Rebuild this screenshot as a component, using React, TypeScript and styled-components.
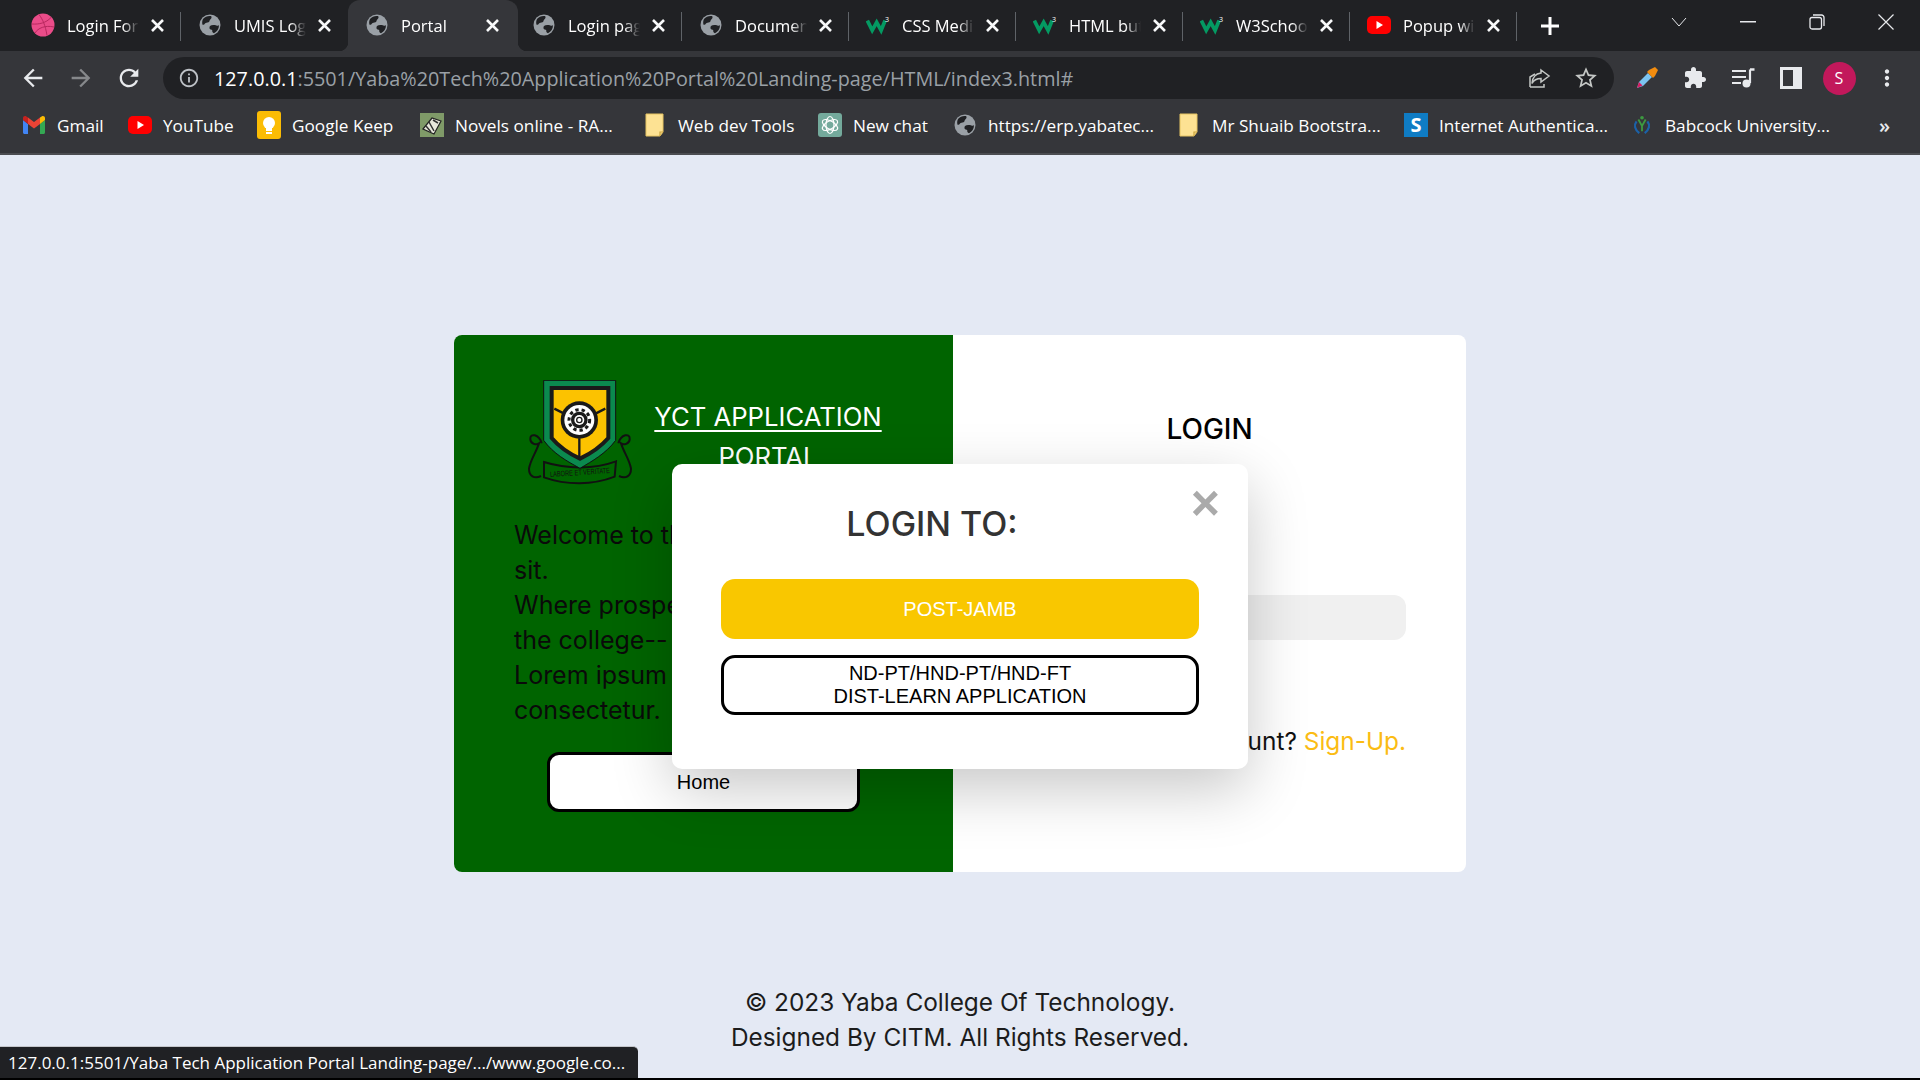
import React from "react";
import styled, { createGlobalStyle } from "styled-components";

const GlobalStyle = createGlobalStyle`
  html, body {
    margin: 0;
    padding: 0;
    height: 100%;
    overflow: hidden;
  }
  * { box-sizing: border-box; }
  #root { height: 100%; }
`;

const chromeFont = `"Open Sans", "Noto Sans", sans-serif`;
const pageFont = `Inter, "Open Sans", sans-serif`;

/* ---------- favicons and logos ---------- */

const Globe = () => (
  <svg width="22" height="22" viewBox="0 0 22 22">
    <circle cx="11" cy="11" r="10.5" fill="#9aa0a6" />
    <path d="M4 5c2-2.5 5-3.5 8-3 1 1 .5 2.5-.5 3.2-1.2.8-.6 2.4-2 3-1.300.6-2.800 0-3.500 1.300-.5 1-1.500 1.500-2.500 1.200C3 9 3 7 4 5z" fill="#202124" />
    <path d="M11 12c1.500-1.200 4-1.200 6.500-.5 1 .3 1.800.2 2.500-.3 0 3.500-1.800 6.500-5 8-1.500-.4-2-1.700-1.700-3-.8-.8-2.600-.2-2.800-2.200-.1-.8 0-1.500.5-2z" fill="#202124" />
  </svg>
);

const Dribbble = () => (
  <svg width="24" height="24" viewBox="0 0 24 24" fill="none">
    <circle cx="12" cy="12" r="11.500" fill="#ea4c89" />
    <g stroke="#b8285f" strokeWidth="1">
      <path d="M8 1.500c3.500 4.500 6.500 11 8 21" />
      <path d="M1 11c7 .5 14-1 19-6.500" />
      <path d="M4 20c3-5 10-8 19-6" />
    </g>
  </svg>
);

const W3 = () => (
  <svg width="27" height="20" viewBox="0 0 27 20" fill="none">
    <polyline points="1.500,5 7,16 12,7 17,16 21.500,5" stroke="#049a62" strokeWidth="4.200" />
    <text x="21.500" y="7" fontSize="8" fill="#fff" fontFamily="Open Sans, sans-serif">3</text>
  </svg>
);

const YouTube = () => (
  <svg width="24" height="18" viewBox="0 0 24 18">
    <rect width="24" height="18" rx="5" fill="#f00" />
    <path d="M9.500 5l6.500 4-6.500 4z" fill="#fff" />
  </svg>
);

const Gmail = () => (
  <svg width="22" height="18" viewBox="0 0 22 18" fill="none">
    <path d="M0 4v12.500c0 .8.700 1.500 1.500 1.500H5V8z" fill="#4285f4" />
    <path d="M17 8v10h3.500c.8 0 1.500-.7 1.500-1.500V4z" fill="#34a853" />
    <path d="M5 8l6 4.500L17 8V1.500L11 6 5 1.500z" fill="#ea4335" />
    <path d="M0 4l5 4V1.500L3 .3C1.700-.5 0 .5 0 2z" fill="#c5221f" />
    <path d="M17 1.500V8l5-4V2c0-1.500-1.700-2.500-3-1.700z" fill="#fbbc04" />
  </svg>
);

const Keep = () => (
  <svg width="24" height="28" viewBox="0 0 24 28">
    <rect width="24" height="28" rx="3" fill="#fbbc04" />
    <circle cx="12" cy="12" r="6" fill="#fff" />
    <rect x="9" y="16" width="6" height="4" fill="#fff" />
    <rect x="9" y="21" width="6" height="2" fill="#fff" />
  </svg>
);

const Novels = () => (
  <svg width="24" height="24" viewBox="0 0 24 24" fill="none">
    <rect width="24" height="24" fill="#7f9a68" />
    <path d="M3 16L12 5l9 3-7 13z" fill="#e8e8dc" stroke="#222" strokeWidth="1.200" />
    <path d="M9 9l5 9M6 13l5 6M13 7l5 3" stroke="#333" strokeWidth="1.500" />
  </svg>
);

const Folder = () => (
  <svg width="20" height="24" viewBox="0 0 20 24">
    <path d="M1 1h17v18l-3 4H1z" fill="#fde293" stroke="#e6c463" strokeWidth="1" />
    <path d="M15 23v-4h3" fill="none" stroke="#c9a23c" strokeWidth="1.200" />
  </svg>
);

const ChatGpt = () => (
  <svg width="24" height="24" viewBox="0 0 24 24" fill="none">
    <rect width="24" height="24" rx="3" fill="#74aa9c" />
    <g stroke="#fff" strokeWidth="1.200">
      <ellipse cx="12" cy="12" rx="4" ry="8.500" />
      <ellipse cx="12" cy="12" rx="4" ry="8.500" transform="rotate(60 12 12)" />
      <ellipse cx="12" cy="12" rx="4" ry="8.500" transform="rotate(120 12 12)" />
    </g>
  </svg>
);

const SquareS = () => (
  <svg width="24" height="24" viewBox="0 0 24 24">
    <rect width="24" height="24" fill="#0f7cc4" />
    <text x="12" y="19" fontSize="20" fontWeight="700" textAnchor="middle" fill="#fff" fontFamily="Open Sans, sans-serif">S</text>
  </svg>
);

const Babcock = () => (
  <svg width="20" height="20" viewBox="0 0 20 22" fill="none">
    <path d="M4 7C1 11 2 16 7 20" stroke="#1b62a8" strokeWidth="2.500" />
    <path d="M16 7c3 4 2 9-3 13" stroke="#1b62a8" strokeWidth="2.500" />
    <path d="M6 5l4 7 4-7M10 12v6" stroke="#3d9a40" strokeWidth="2" />
    <circle cx="10" cy="3" r="2" fill="#3d9a40" />
  </svg>
);

const CollegeCrest = () => (
  <svg width="104" height="105" viewBox="85 60 310 315" fill="none">
    {/* scrolls */}
    <path d="M125 250c-8-28-36-32-34-12 1 14 18 18 26 12-10 30-26 50-30 76 0 22 16 32 36 22" stroke="#111" strokeWidth="6" />
    <path d="M355 250c8-28 36-32 34-12-1 14-18 18-26 12 10 30 26 50 30 76 0 22-16 32-36 22" stroke="#111" strokeWidth="6" />
    <path d="M132 306c70 22 150 22 216-2l-4 46c-66 26-144 26-212 2z" fill="#006400" stroke="#111" strokeWidth="6" />
    <text x="240" y="345" fontSize="23" fill="#111" textAnchor="middle" fontFamily="Liberation Sans, sans-serif" textLength="180" lengthAdjust="spacingAndGlyphs" transform="rotate(-4 240 340)">LABORE ET VERITATE</text>
    {/* shield */}
    <path d="M131 61h216v180c-30 40-70 62-107 84-40-22-80-44-109-84z" fill="#0b8a4f" stroke="#111" strokeWidth="3" />
    <path d="M155 84h170v150c-26 30-56 48-85 62-30-14-60-32-85-62z" fill="#fcc200" stroke="#1a1a1a" strokeWidth="12" />
    <path d="M238 235v62M163 146l28 14M316 146l-28 14" stroke="#1a1a1a" strokeWidth="7" />
    <circle cx="238" cy="180" r="56" fill="#1a1a1a" />
    <circle cx="238" cy="180" r="45" fill="#fff" />
    <circle cx="238" cy="180" r="31" stroke="#1a1a1a" strokeWidth="9" strokeDasharray="10 9" />
    <circle cx="238" cy="180" r="25" fill="#1a1a1a" />
    <circle cx="238" cy="180" r="15" fill="#fff" />
    <circle cx="238" cy="180" r="8" stroke="#1a1a1a" strokeWidth="4" />
  </svg>
);

/* ---------- toolbar icons ---------- */

const MaterialIcon = ({ d, size = 24, color = "#e8eaed" }: { d: string; size?: number; color?: string }) => (
  <svg width={size} height={size} viewBox="0 0 24 24" fill={color}>
    <path d={d} />
  </svg>
);

const ICONS = {
  back: "M20 11H7.830l5.590-5.590L12 4l-8 8 8 8 1.410-1.410L7.830 13H20v-2z",
  forward: "M4 11h12.170l-5.590-5.590L12 4l8 8-8 8-1.410-1.410L16.170 13H4v-2z",
  reload: "M17.650 6.350C16.200 4.900 14.210 4 12 4c-4.420 0-7.990 3.580-7.990 8s3.570 8 7.990 8c3.730 0 6.840-2.550 7.730-6h-2.080c-.82 2.330-3.040 4-5.650 4-3.310 0-6-2.690-6-6s2.690-6 6-6c1.660 0 3.140.690 4.220 1.780L13 11h7V4l-2.350 2.350z",
  info: "M11 7h2v2h-2zm0 4h2v6h-2zm1-9C6.480 2 2 6.480 2 12s4.480 10 10 10 10-4.480 10-10S17.520 2 12 2zm0 18c-4.410 0-8-3.590-8-8s3.590-8 8-8 8 3.590 8 8-3.590 8-8 8z",
  star: "M22 9.240l-7.190-.62L12 2 9.190 8.630 2 9.240l5.460 4.730L5.820 21 12 17.270 18.180 21l-1.630-7.030L22 9.240zM12 15.400l-3.760 2.270 1-4.280-3.320-2.880 4.380-.38L12 6.100l1.710 4.040 4.380.38-3.320 2.880 1 4.280L12 15.400z",
  puzzle: "M20.500 11H19V7c0-1.100-.9-2-2-2h-4V3.500C13 2.120 11.880 1 10.500 1S8 2.120 8 3.500V5H4c-1.100 0-1.990.9-1.990 2v3.800H3.500c1.490 0 2.700 1.210 2.700 2.700s-1.210 2.700-2.700 2.700H2V20c0 1.100.9 2 2 2h3.800v-1.500c0-1.490 1.210-2.700 2.700-2.700 1.490 0 2.700 1.210 2.700 2.700V22H17c1.100 0 2-.9 2-2v-4h1.500c1.380 0 2.500-1.120 2.500-2.500S21.880 11 20.500 11z",
  dots: "M12 8c1.100 0 2-.9 2-2s-.9-2-2-2-2 .9-2 2 .9 2 2 2zm0 2c-1.100 0-2 .9-2 2s.9 2 2 2 2-.9 2-2-.9-2-2-2zm0 6c-1.100 0-2 .9-2 2s.9 2 2 2 2-.9 2-2-.9-2-2-2z",
};

const ShareIcon = () => (
  <svg width="24" height="24" viewBox="0 0 24 24" fill="none" stroke="#c4c7c5" strokeWidth="1.500">
    <path d="M3 21V11l5-3M3 21h14v-3" />
    <path d="M14 4l8 6-8 6v-3.500c-4 0-7 1-9 5 .5-6 4-10 9-10.500z" />
  </svg>
);

const Eyedropper = () => (
  <svg width="24" height="24" viewBox="0 0 24 24" fill="none">
    <path d="M2 22l2-6 9-9 4 4-9 9z" fill="#7cc4f0" />
    <path d="M2 22l2-6 3.500 3.500z" fill="#d81b60" />
    <path d="M12 6l2-2 2-1 4-2 3 3-2 4-1 2-2 2z" fill="#f28c0f" />
  </svg>
);

const QueueIcon = () => (
  <svg width="26" height="24" viewBox="0 0 26 24" fill="none">
    <path d="M2 5h14M2 11h14M2 17h9" stroke="#e8eaed" strokeWidth="2.200" />
    <path d="M20 3.500V17" stroke="#e8eaed" strokeWidth="2.200" />
    <path d="M20 3.500h4.500" stroke="#e8eaed" strokeWidth="2.500" />
    <circle cx="16.500" cy="17.500" r="4" fill="#e8eaed" />
  </svg>
);

const SidePanelIcon = () => (
  <svg width="22" height="22" viewBox="0 0 22 22" fill="none">
    <rect x="1.500" y="1.500" width="19" height="19" stroke="#e8eaed" strokeWidth="3" />
    <rect x="13" y="2" width="8" height="18" fill="#e8eaed" />
  </svg>
);

/* ---------- data ---------- */

type TabData = { title: string; icon: React.ReactNode; active?: boolean; sep?: boolean };

const tabs: TabData[] = [
  { title: "Login Form", icon: <Dribbble />, sep: true },
  { title: "UMIS Login", icon: <Globe /> },
  { title: "Portal", icon: <Globe />, active: true },
  { title: "Login page", icon: <Globe />, sep: true },
  { title: "Document", icon: <Globe />, sep: true },
  { title: "CSS Media", icon: <W3 />, sep: true },
  { title: "HTML button", icon: <W3 />, sep: true },
  { title: "W3Schools", icon: <W3 />, sep: true },
  { title: "Popup with", icon: <YouTube />, sep: true },
];

const bookmarks: { label: string; icon: React.ReactNode; width: number }[] = [
  { label: "Gmail", icon: <Gmail />, width: 106 },
  { label: "YouTube", icon: <YouTube />, width: 129 },
  { label: "Google Keep", icon: <Keep />, width: 163 },
  { label: "Novels online - RA...", icon: <Novels />, width: 223 },
  { label: "Web dev Tools", icon: <Folder />, width: 175 },
  { label: "New chat", icon: <ChatGpt />, width: 135 },
  { label: "https://erp.yabatec...", icon: <Globe />, width: 224 },
  { label: "Mr Shuaib Bootstra...", icon: <Folder />, width: 227 },
  { label: "Internet Authentica...", icon: <SquareS />, width: 226 },
  { label: "Babcock University...", icon: <Babcock />, width: 230 },
];

/* ---------- app ---------- */

export default function App() {
  return (
    <Screen>
      <GlobalStyle />
      <TabStrip>
        {tabs.map((tab) => (
          <Tab key={tab.title} $active={tab.active} $sep={tab.sep}>
            <TabIcon>{tab.icon}</TabIcon>
            <TabTitle>{tab.title}</TabTitle>
            <svg width="15" height="15" viewBox="0 0 15 15" fill="none" stroke="#f8f9fa" strokeWidth="2.600">
              <path d="M2 2l11 11M13 2L2 13" />
            </svg>
          </Tab>
        ))}
        <NewTab>
          <svg width="20" height="20" viewBox="0 0 20 20" fill="none" stroke="#fff" strokeWidth="3">
            <path d="M10 1v18M1 10h18" />
          </svg>
        </NewTab>
        <WindowControls>
          <WindowButton>
            <svg width="18" height="12" viewBox="0 0 18 12" fill="none" stroke="#e8eaed"><path d="M2 2l7 8 7-8" /></svg>
          </WindowButton>
          <WindowButton>
            <svg width="16" height="2" viewBox="0 0 16 2"><rect width="16" height="1.500" fill="#e8eaed" /></svg>
          </WindowButton>
          <WindowButton>
            <svg width="16" height="16" viewBox="0 0 16 16" fill="none" stroke="#e8eaed" strokeWidth="1.300"><rect x="1" y="3.500" width="11.500" height="11.500" rx="2" /><path d="M4 1h8.500A2.500 2.500 0 0 1 15 3.500V12" /></svg>
          </WindowButton>
          <WindowButton>
            <svg width="16" height="16" viewBox="0 0 16 16" fill="none" stroke="#e8eaed" strokeWidth="1.200"><path d="M.5.500l15 15M15.500.5l-15 15" /></svg>
          </WindowButton>
        </WindowControls>
      </TabStrip>

      <Toolbar>
        <NavButtons>
          <NavButton><MaterialIcon d={ICONS.back} size={28} /></NavButton>
          <NavButton><MaterialIcon d={ICONS.forward} size={28} color="#86888b" /></NavButton>
          <NavButton><MaterialIcon d={ICONS.reload} size={28} /></NavButton>
        </NavButtons>
        <AddressBar>
          <MaterialIcon d={ICONS.info} size={22} color="#bdc1c6" />
          <Url>
            <UrlHost>127.0.0.1</UrlHost>:5501/Yaba%20Tech%20Application%20Portal%20Landing-page/HTML/index3.html#
          </Url>
          <AddressActions>
            <ShareIcon />
            <MaterialIcon d={ICONS.star} size={26} color="#c4c7c5" />
          </AddressActions>
        </AddressBar>
        <Extensions>
          <ExtensionSlot><Eyedropper /></ExtensionSlot>
          <ExtensionSlot><MaterialIcon d={ICONS.puzzle} /></ExtensionSlot>
          <ExtensionSlot><QueueIcon /></ExtensionSlot>
          <ExtensionSlot><SidePanelIcon /></ExtensionSlot>
          <ExtensionSlot><Avatar>S</Avatar></ExtensionSlot>
          <ExtensionSlot><MaterialIcon d={ICONS.dots} size={26} /></ExtensionSlot>
        </Extensions>
      </Toolbar>

      <BookmarkBar>
        {bookmarks.map((b) => (
          <Bookmark key={b.label} $width={b.width}>
            <BookmarkIcon>{b.icon}</BookmarkIcon>
            {b.label}
          </Bookmark>
        ))}
        <MoreBookmarks>»</MoreBookmarks>
      </BookmarkBar>

      <Page>
        <Card>
          <BrandPanel>
            <BrandHead>
              <CollegeCrest />
              <BrandTitle>YCT APPLICATION PORTAL</BrandTitle>
            </BrandHead>
            <Intro>
              Welcome to the portal, lorem
              <br />
              sit.
              <br />
              Where prospective students
              <br />
              the college--
              <br />
              Lorem ipsum dolor sit amet
              <br />
              consectetur.
            </Intro>
            <HomeButton>Home</HomeButton>
          </BrandPanel>
          <LoginPanel>
            <LoginTitle>LOGIN</LoginTitle>
            <FieldBox />
            <SignUpLine>
              Don't have an account? <SignUpLink>Sign-Up.</SignUpLink>
            </SignUpLine>
          </LoginPanel>
        </Card>
        <Footer>
          © 2023 Yaba College Of Technology.
          <br />
          Designed By CITM. All Rights Reserved.
        </Footer>

        <Modal>
          <ModalHead>
            <ModalTitle>LOGIN TO:</ModalTitle>
            <ModalClose>×</ModalClose>
          </ModalHead>
          <ModalButton $primary>POST-JAMB</ModalButton>
          <ModalButton>
            ND-PT/HND-PT/HND-FT
            <br />
            DIST-LEARN APPLICATION
          </ModalButton>
        </Modal>

        <StatusBubble>127.0.0.1:5501/Yaba Tech Application Portal Landing-page/.../www.google.co...</StatusBubble>
      </Page>
      <BottomEdge />
    </Screen>
  );
}

const Screen = styled.div`
  height: 100%;
  display: flex;
  flex-direction: column;
  font-family: ${chromeFont};
`;

const TabStrip = styled.div`
  height: 51px;
  flex: none;
  background: #202124;
  display: flex;
  padding-left: 14px;
`;

const Tab = styled.div<{ $active?: boolean; $sep?: boolean }>`
  position: relative;
  flex: none;
  width: ${(p) => (p.$active ? "170px" : "167px")};
  margin-right: ${(p) => (p.$active ? "-3px" : "0")};
  height: 51px;
  display: flex;
  align-items: center;
  padding: 0 ${(p) => (p.$active ? "18px" : "16px")} 1px 17px;
  color: #fff;
  font-size: 16.500px;
  background: ${(p) => (p.$active ? "#35363a" : "transparent")};
  border-radius: 12px 12px 0 0;

  &::before {
    content: "";
    display: ${(p) => (p.$active ? "block" : "none")};
    position: absolute;
    left: -9px;
    right: -9px;
    bottom: 0;
    height: 9px;
    background:
      radial-gradient(circle at 0 0, transparent 9px, #35363a 9.500px) left bottom / 9px 9px no-repeat,
      radial-gradient(circle at 100% 0, transparent 9px, #35363a 9.500px) right bottom / 9px 9px no-repeat;
  }

  &::after {
    content: "";
    position: absolute;
    right: 0;
    top: 12px;
    bottom: 10px;
    width: 1px;
    background: ${(p) => (p.$sep ? "#5f6368" : "transparent")};
  }
`;

const TabIcon = styled.span`
  width: 24px;
  height: 24px;
  flex: none;
  display: flex;
  align-items: center;
  justify-content: center;
`;

const TabTitle = styled.span`
  margin: 0 11px 0 12px;
  flex: 1;
  min-width: 0;
  overflow: hidden;
  white-space: nowrap;
  -webkit-mask-image: linear-gradient(to right, #000 78%, transparent 100%);
  mask-image: linear-gradient(to right, #000 78%, transparent 100%);
`;

const NewTab = styled.div`
  width: 66px;
  height: 51px;
  display: flex;
  align-items: center;
  justify-content: center;
`;

const WindowControls = styled.div`
  margin-left: auto;
  display: flex;
  align-items: flex-start;
`;

const WindowButton = styled.div`
  width: 69px;
  height: 44px;
  display: flex;
  align-items: center;
  justify-content: center;
`;

const Toolbar = styled.div`
  height: 54px;
  flex: none;
  background: #35363a;
  display: flex;
  align-items: center;
  padding: 0 0 0 13px;
`;

const NavButtons = styled.div`
  display: flex;
  gap: 8px;
  margin-right: 14px;
`;

const NavButton = styled.div`
  width: 40px;
  height: 40px;
  display: flex;
  align-items: center;
  justify-content: center;
`;

const AddressBar = styled.div`
  width: 1451px;
  height: 42px;
  border-radius: 21px;
  background: #202124;
  display: flex;
  align-items: center;
  padding: 0 15px;
`;

const Url = styled.div`
  margin-left: 14px;
  font-size: 19.800px;
  color: #9aa0a6;
  white-space: nowrap;
`;

const UrlHost = styled.span`
  color: #fff;
`;

const AddressActions = styled.div`
  margin-left: auto;
  display: flex;
  align-items: center;
  gap: 22px;
`;

const Extensions = styled.div`
  display: grid;
  grid-template-columns: repeat(6, 48px);
  margin-left: 9px;
`;

const ExtensionSlot = styled.div`
  height: 40px;
  display: flex;
  align-items: center;
  justify-content: center;
`;

const Avatar = styled.div`
  width: 33px;
  height: 33px;
  border-radius: 50%;
  background: #c2185b;
  color: #fff;
  font-size: 16px;
  display: flex;
  align-items: center;
  justify-content: center;
`;

const BookmarkBar = styled.div`
  height: 50px;
  flex: none;
  background: #35363a;
  display: flex;
  align-items: center;
  padding: 0 0 8px 22px;
  border-bottom: 2px solid #4b4c50;
`;

const Bookmark = styled.div<{ $width: number }>`
  width: ${(p) => p.$width}px;
  flex: none;
  display: flex;
  align-items: center;
  color: #fff;
  font-size: 17.200px;
  white-space: nowrap;
`;

const BookmarkIcon = styled.span`
  width: 24px;
  height: 28px;
  flex: none;
  margin-right: 11px;
  display: flex;
  align-items: center;
  justify-content: center;
`;

const MoreBookmarks = styled.div`
  margin-left: auto;
  margin-right: 30px;
  color: #e8eaed;
  font-size: 20px;
  font-weight: 600;
`;

const Page = styled.main`
  position: relative;
  flex: 1;
  min-height: 0;
  background: #e4e9f4;
  display: flex;
  flex-direction: column;
  align-items: center;
  padding-top: 180px;
  font-family: ${pageFont};
  overflow: hidden;
`;

const BottomEdge = styled.div`
  height: 2px;
  flex: none;
  background: #000;
`;

const Card = styled.section`
  width: 1012px;
  height: 537px;
  flex: none;
  display: flex;
  border-radius: 8px;
  overflow: hidden;
  background: #fff;
`;

const BrandPanel = styled.div`
  width: 499px;
  flex: none;
  background: #006400;
  padding: 45px 0 0 60px;
  display: flex;
  flex-direction: column;
`;

const BrandHead = styled.div`
  display: flex;
  align-items: flex-start;
  margin-left: 14px;
  gap: 22px;
`;

const BrandTitle = styled.h1`
  width: 228px;
  margin: 17px 0 0;
  font-size: 25.700px;
  font-weight: 400;
  line-height: 40px;
  color: #fff;
  text-align: center;
  text-decoration: underline;
  text-underline-offset: 4px;
  text-decoration-thickness: 2px;
`;

const Intro = styled.p`
  margin: 33px 0 0;
  font-size: 25px;
  line-height: 35px;
  color: #0a0a0a;
  white-space: nowrap;
`;

const HomeButton = styled.button`
  align-self: flex-start;
  margin: 24px 0 0 33px;
  width: 313px;
  height: 60px;
  border: 3px solid #000;
  border-radius: 12px;
  background: #fff;
  color: #000;
  font-family: "Liberation Sans", sans-serif;
  font-size: 20px;
`;

const LoginPanel = styled.div`
  flex: 1;
  position: relative;
  padding: 74px 60px 0;
  display: flex;
  flex-direction: column;
  align-items: center;
`;

const LoginTitle = styled.h2`
  margin: 0;
  font-size: 28px;
  line-height: 40px;
  font-weight: 500;
  color: #000;
`;

const FieldBox = styled.div`
  width: 100%;
  height: 45px;
  margin-top: 146px;
  border-radius: 12px;
  background: #f0f0f0;
`;

const SignUpLine = styled.div`
  width: 100%;
  margin-top: 84px;
  text-align: right;
  font-size: 24.400px;
  line-height: 35px;
  color: #111;
  white-space: nowrap;
`;

const SignUpLink = styled.span`
  color: #fbbc14;
`;

const Footer = styled.footer`
  margin-top: 113px;
  text-align: center;
  font-size: 24.400px;
  line-height: 35px;
  color: #1c1c1c;
`;

const Modal = styled.div`
  position: absolute;
  left: 672px;
  top: 309px;
  width: 576px;
  height: 305px;
  padding: 26px 49px 0;
  background: #fff;
  border-radius: 10px;
  box-shadow: 0 20px 60px rgba(0, 0, 0, 0.22);
  display: flex;
  flex-direction: column;
`;

const ModalHead = styled.div`
  display: flex;
  align-items: flex-start;
  margin-bottom: 27px;
`;

const ModalTitle = styled.h3`
  flex: 1;
  margin: 6px 0 0;
  font-size: 34px;
  line-height: 56px;
  font-weight: 500;
  color: #333;
  text-align: center;
`;

const ModalClose = styled.span`
  width: 77px;
  margin-right: -21px;
  text-align: right;
  font-family: "Liberation Sans", sans-serif;
  font-size: 50px;
  line-height: 26px;
  font-weight: 700;
  color: #aaa;
`;

const ModalButton = styled.button<{ $primary?: boolean }>`
  width: 478px;
  height: 60px;
  flex: none;
  margin-bottom: 16px;
  border-radius: 14px;
  border: ${(p) => (p.$primary ? "none" : "3px solid #000")};
  background: ${(p) => (p.$primary ? "#f9c700" : "#fff")};
  color: ${(p) => (p.$primary ? "#fff" : "#000")};
  font-family: "Liberation Sans", sans-serif;
  font-size: 20px;
  line-height: 23px;
`;

const StatusBubble = styled.div`
  position: absolute;
  left: 0;
  bottom: 0;
  width: 638px;
  height: 32px;
  padding: 0 8px;
  display: flex;
  align-items: center;
  background: #202124;
  border-top: 1px solid #c4c6cb;
  border-top-right-radius: 5px;
  color: #fff;
  font-family: ${chromeFont};
  font-size: 17px;
  white-space: nowrap;
`;
